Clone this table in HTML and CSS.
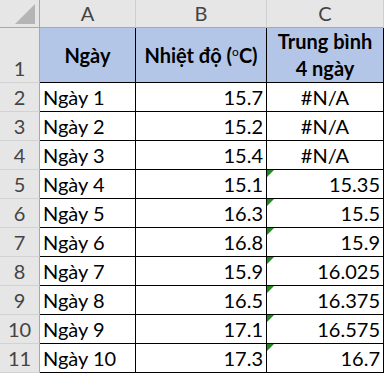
FILE: index.html
```html
<!DOCTYPE html>
<html lang="vi">
<head>
<meta charset="utf-8">
<title>Trung bình 4 ngày</title>
<link rel="stylesheet" href="styles.css">
</head>
<body>
<div class="sheet">
  <div class="corner"><span class="tri"></span></div>
  <div class="colh">A</div>
  <div class="colh">B</div>
  <div class="colh">C</div>

  <div class="rowh">1</div>
  <div class="cell head"><span>Ngày</span></div>
  <div class="cell head"><span>Nhiệt độ (<sup class="deg">o</sup>C)</span></div>
  <div class="cell head"><span>Trung bình<br>4 ngày</span></div>

  <div class="rowh">2</div>
  <div class="cell">Ngày 1</div>
  <div class="cell num">15.7</div>
  <div class="cell center">#N/A</div>

  <div class="rowh">3</div>
  <div class="cell">Ngày 2</div>
  <div class="cell num">15.2</div>
  <div class="cell center">#N/A</div>

  <div class="rowh">4</div>
  <div class="cell">Ngày 3</div>
  <div class="cell num">15.4</div>
  <div class="cell center">#N/A</div>

  <div class="rowh">5</div>
  <div class="cell">Ngày 4</div>
  <div class="cell num">15.1</div>
  <div class="cell num flag">15.35</div>

  <div class="rowh">6</div>
  <div class="cell">Ngày 5</div>
  <div class="cell num">16.3</div>
  <div class="cell num flag">15.5</div>

  <div class="rowh">7</div>
  <div class="cell">Ngày 6</div>
  <div class="cell num">16.8</div>
  <div class="cell num flag">15.9</div>

  <div class="rowh">8</div>
  <div class="cell">Ngày 7</div>
  <div class="cell num">15.9</div>
  <div class="cell num flag">16.025</div>

  <div class="rowh">9</div>
  <div class="cell">Ngày 8</div>
  <div class="cell num">16.5</div>
  <div class="cell num flag">16.375</div>

  <div class="rowh">10</div>
  <div class="cell">Ngày 9</div>
  <div class="cell num">17.1</div>
  <div class="cell num flag">16.575</div>

  <div class="rowh">11</div>
  <div class="cell">Ngày 10</div>
  <div class="cell num">17.3</div>
  <div class="cell num flag">16.7</div>
</div>
</body>
</html>
```

FILE: styles.css
```css
* { box-sizing: border-box; }

html, body {
  margin: 0;
  padding: 0;
  background: #ffffff;
}

body {
  font-family: Lato, "Open Sans", "Noto Sans", sans-serif;
  font-size: 20px;
  color: #000;
}

.sheet {
  display: grid;
  grid-template-columns: 40px 96px 131px 117px;
  grid-template-rows: 28px 55px repeat(10, 29px);
}

.corner {
  position: relative;
  background: #e6e6e6;
  border-right: 1px solid #a8a8a8;
  border-bottom: 1px solid #a8a8a8;
}

.tri {
  position: absolute;
  left: 15px;
  top: 4px;
  width: 20px;
  height: 20px;
  background: #b5b5b5;
  clip-path: polygon(100% 0, 100% 100%, 0 100%);
}

.colh {
  display: flex;
  align-items: center;
  justify-content: center;
  background: #e6e6e6;
  color: #444;
  line-height: 27px;
  border-right: 1px solid #cfcfcf;
  border-bottom: 1px solid #a8a8a8;
}

.rowh {
  display: flex;
  align-items: flex-end;
  justify-content: center;
  background: #e6e6e6;
  color: #444;
  line-height: 28px;
  border-right: 1px solid #a8a8a8;
  border-bottom: 1px solid #d2d2d2;
}

.cell {
  position: relative;
  display: flex;
  align-items: flex-end;
  padding: 0 3px;
  line-height: 28px;
  white-space: nowrap;
  border-right: 1px solid #000;
  border-bottom: 1px solid #000;
}

.num { justify-content: flex-end; }
.center { justify-content: center; }

.head {
  background: #b4c6e7;
  font-weight: 700;
  align-items: center;
  justify-content: center;
  text-align: center;
  line-height: 27px;
}

.deg {
  font-size: 12px;
  line-height: 0;
  vertical-align: 7px;
  font-weight: 400;
}

.flag::before {
  content: "";
  position: absolute;
  left: 0;
  top: 0;
  width: 7px;
  height: 7px;
  background: #1f8a1f;
  clip-path: polygon(0 0, 100% 0, 0 100%);
}
```
